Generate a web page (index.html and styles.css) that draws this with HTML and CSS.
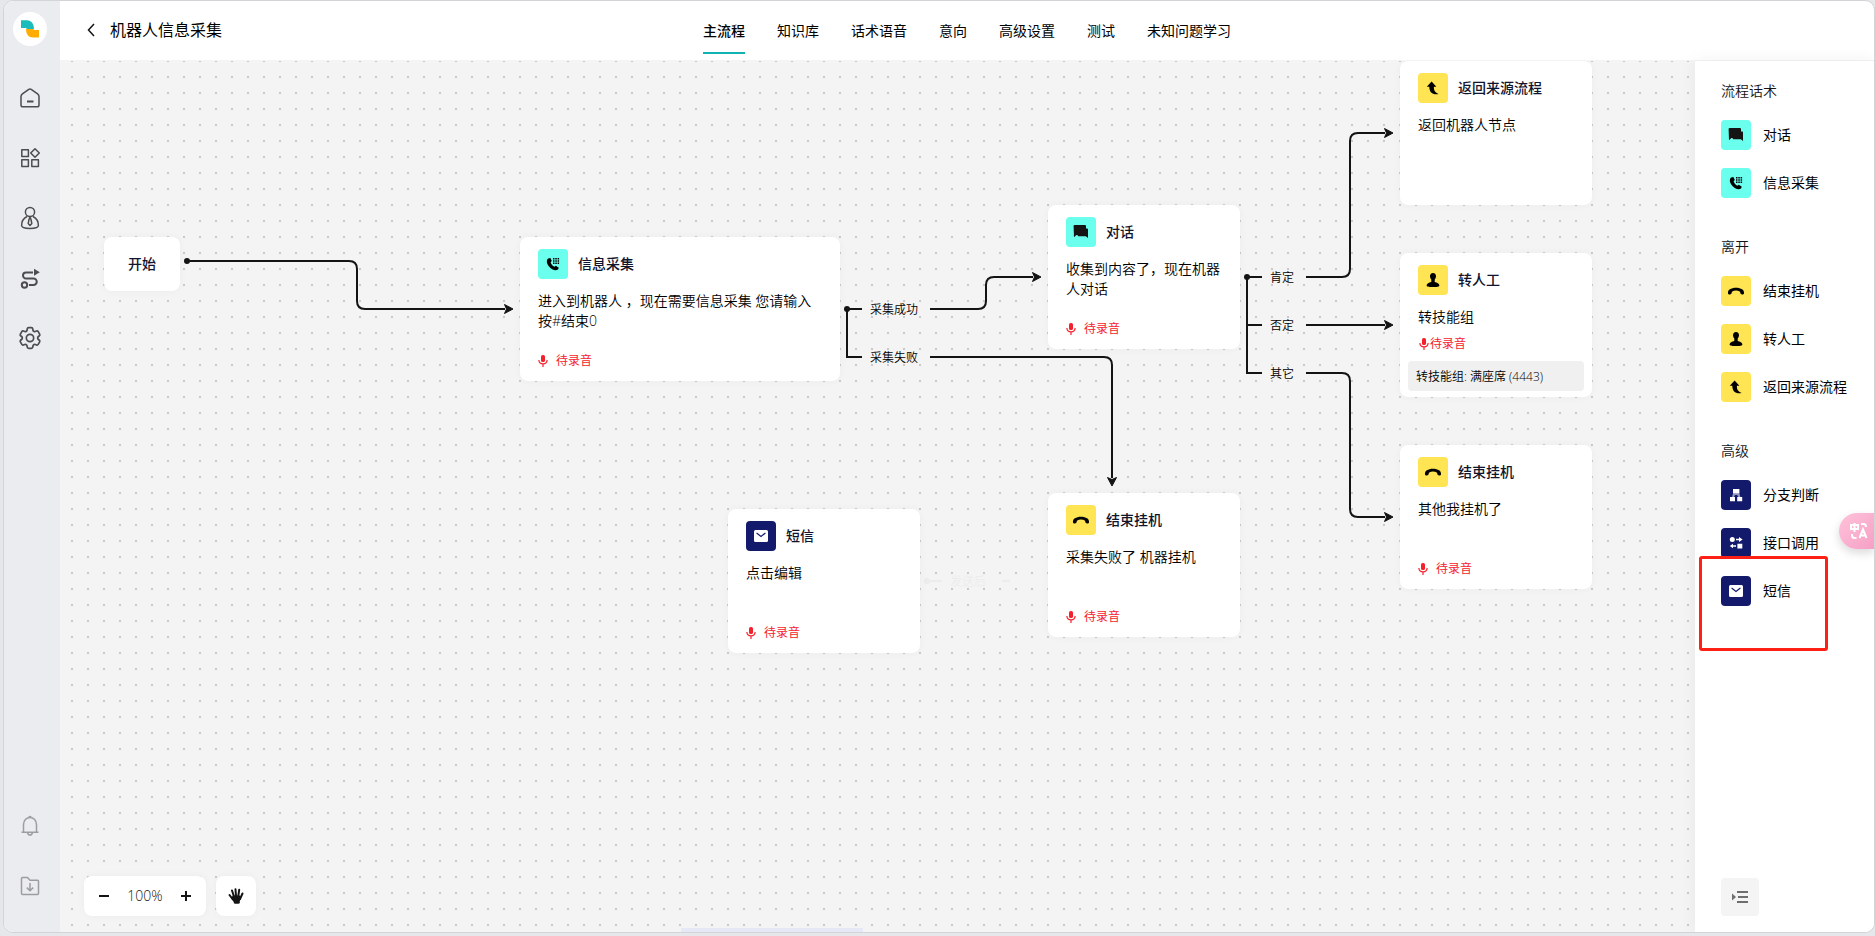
FILE: index.html
```html
<!DOCTYPE html>
<html lang="zh-CN">
<head>
<meta charset="utf-8">
<meta name="viewport" content="width=device-width, initial-scale=1">
<title>机器人信息采集</title>
<link rel="stylesheet" href="styles.css">
</head>
<body>
<svg class="sprite" aria-hidden="true">
  <symbol id="i-phone" viewBox="0 0 30 30"><path d="M10.2 9.4C8.4 10.8 8.3 13.8 10.8 17.2C13.8 20.8 17.4 22.2 20 20.6L20.8 18.8L17.8 16.8L16.4 17.8C14.6 17 13.2 15.3 12.6 13.3L13.8 12.1L12.4 9Z"/><path d="M15 9h1.500v1.500h-1.500zM17.300 9h1.500v1.500h-1.500zM19.600 9h1.500v1.500h-1.500zM15 11.300h1.500v1.500h-1.500zM17.300 11.300h1.500v1.500h-1.500zM19.600 11.300h1.500v1.500h-1.500zM15 13.600h1.500v1.500h-1.500zM17.300 13.600h1.500v1.500h-1.500zM19.600 13.600h1.500v1.500h-1.500z"/></symbol>
  <symbol id="i-chat" viewBox="0 0 30 30"><path fill="#141414" d="M8.600 8H19Q20 8 20 9V11.600H21.200Q22 11.600 22 12.400V20.900L19.800 19.200H12.400Q11.600 19.200 11.600 18H10.400L8 20.200L7.600 9Q7.600 8 8.600 8Z"/></symbol>
  <symbol id="i-hangup" viewBox="0 0 30 30"><path d="M7 17.400C6.400 14 10 11.800 15 11.800S23.600 14 23 17.400Q22.800 18.800 20.800 18.400Q18.900 18 19.100 15.800Q17 14.600 15 14.600T10.900 15.800Q11.100 18 9.200 18.400Q7.200 18.800 7 17.400Z"/></symbol>
  <symbol id="i-person" viewBox="0 0 30 30"><path d="M15 8C17 8 18 9.400 18 11.200C18 12.800 17.200 14 16.700 14.600V17C19 17.400 21.400 18.600 21.400 20.400C21.400 21.800 18 22.100 15 22.100S8.600 21.800 8.600 20.400C8.600 18.600 11 17.400 13.300 17V14.600C12.800 14 12 12.800 12 11.200C12 9.400 13 8 15 8Z"/></symbol>
  <symbol id="i-return" viewBox="0 0 30 30"><path d="M13.600 8.500L18.400 13.800H15.900C15.700 17.400 17 19.800 20.800 21C15.400 22.300 11.300 20 11.300 13.800H8.800Z"/></symbol>
  <symbol id="i-branch" viewBox="0 0 30 30"><g fill="#fff"><path d="M12 9h6.400v4.400H12zM9 17h5v4.200H9zM16.200 17h5v4.200h-5z"/><path opacity=".55" d="M12 13.400h6.400l1 3.600h-2.200l-1-2h-2.200l-1 2h-2z"/></g></symbol>
  <symbol id="i-api" viewBox="0 0 30 30"><g fill="#fff"><circle cx="11.300" cy="11.500" r="2.500"/><path d="M15 10.700h3V9l3.600 2.500L18 14v-1.700h-3zM16.400 15.800h4.900v4.600h-4.900zM15 17.300h-3v-1.500L8.800 18l3.200 2.200v-1.500h3z"/></g></symbol>
  <symbol id="i-mail" viewBox="0 0 30 30"><rect x="8" y="9" width="14" height="12" rx="1.500" fill="#fff"/><path d="M10.600 12L15 15.400L19.400 12" fill="none" stroke="#141a6b" stroke-width="1.200"/></symbol>
  <symbol id="i-mic" viewBox="0 0 10 12"><rect x="3" y="0" width="4" height="7" rx="1.600" fill="currentColor"/><path d="M.9 5Q1 8.900 5 8.900T9.100 5M5 9v3" fill="none" stroke="currentColor" stroke-width="1.200"/></symbol>
</svg>

<div class="window">
  <nav class="rail" aria-label="主导航">
    <a class="logo" href="#" aria-label="首页"><svg width="34" height="34" viewBox="0 0 34 34"><path fill="#1cbcbc" d="M8 8.300h6C18.500 8.300 21 12 21 17H14L13 16H8Z"/><path fill="#ffad05" d="M13 17h7l1 1h5v7.500h-6C15.500 25.500 13 22 13 17Z"/></svg></a>
    <div class="rail-main">
      <a class="rail-link" href="#" aria-label="概览"><svg viewBox="0 0 24 24"><path d="M10.800 3.300Q12 2.500 13.200 3.300L19.600 7.800Q21 8.800 21 10.500V19Q21 20.800 19.200 20.800H4.800Q3 20.800 3 19V10.500Q3 8.800 4.400 7.800Z"/><path d="M9 15.500h6.500" stroke-width="2"/></svg></a>
      <a class="rail-link" href="#" aria-label="应用"><svg viewBox="0 0 24 24"><path d="M3.800 3.800h6.600v6.600H3.800zM3.800 13.800h6.600v6.600H3.800zM13.800 13.800h6.600v6.600h-6.600zM17 2.700L21.300 7L17 11.300L12.700 7Z"/></svg></a>
      <a class="rail-link" href="#" aria-label="客服"><svg viewBox="0 0 24 24"><circle cx="12" cy="6" r="4.600"/><path d="M9 10.500C5 12.500 3.600 16 3.600 19.500Q3.600 22.400 12 22.400T20.400 19.500C20.400 16 19 12.500 15 10.500M12 11L13 13.500L13.800 17.500L12 19.500L10.200 17.500L11 13.500Z"/></svg></a>
      <a class="rail-link" href="#" aria-label="流程"><svg viewBox="0 0 24 24"><circle cx="6.500" cy="19" r="2.700" stroke-width="2"/><path stroke-width="2" d="M15 6.500H8a3 3 0 0 0 0 6h7.500a3.200 3.200 0 0 1 0 6.500h-4.500"/><path class="solid" d="M16 2.800L21.800 6.200L16 9.800Z"/></svg></a>
      <a class="rail-link" href="#" aria-label="设置"><svg viewBox="1.500 1.500 21 21"><path d="M9.594 3.940c.09-.542.56-.94 1.110-.94h2.593c.55 0 1.020.398 1.110.94l.213 1.281c.063.374.313.686.645.870.074.040.147.083.220.127.325.196.720.257 1.075.124l1.217-.456a1.125 1.125 0 0 1 1.370.490l1.296 2.247a1.125 1.125 0 0 1-.260 1.431l-1.003.827c-.293.241-.438.613-.430.992a7.723 7.723 0 0 1 0 .255c-.008.378.137.750.430.991l1.004.827c.424.350.534.955.260 1.430l-1.298 2.247a1.125 1.125 0 0 1-1.369.491l-1.217-.456c-.355-.133-.750-.072-1.076.124a6.470 6.470 0 0 1-.220.128c-.331.183-.581.495-.644.869l-.213 1.281c-.090.543-.560.940-1.110.940h-2.594c-.550 0-1.019-.398-1.110-.940l-.213-1.281c-.062-.374-.312-.686-.644-.870a6.520 6.520 0 0 1-.220-.127c-.325-.196-.720-.257-1.076-.124l-1.217.456a1.125 1.125 0 0 1-1.369-.490l-1.297-2.247a1.125 1.125 0 0 1 .260-1.431l1.004-.827c.292-.240.437-.613.430-.991a6.932 6.932 0 0 1 0-.255c.007-.380-.138-.751-.430-.992l-1.004-.827a1.125 1.125 0 0 1-.260-1.430l1.297-2.247a1.125 1.125 0 0 1 1.370-.491l1.216.456c.356.133.751.072 1.076-.124.072-.044.146-.086.220-.128.332-.183.582-.495.644-.869l.214-1.280Z"/><circle cx="12" cy="12" r="3.200"/></svg></a>
    </div>
    <div class="rail-foot">
      <a class="rail-link muted" href="#" aria-label="通知"><svg viewBox="0 0 24 24"><path d="M5.500 18V10.500A6.500 7 0 0 1 18.500 10.500V18M3.500 18.200h17M9.500 18.500Q10 21 12 21T14.500 18.500M10.800 3.200Q12 1.800 13.200 3.200"/></svg></a>
      <a class="rail-link muted" href="#" aria-label="下载"><svg viewBox="0 0 24 24"><path d="M3.500 4.500Q3.500 3.500 4.500 3.500H9.500L12 6.200H19.500Q20.500 6.200 20.500 7.200V19.500Q20.500 20.500 19.500 20.500H4.500Q3.500 20.500 3.500 19.500ZM12 9V16.500M8.800 13.600L12 16.800L15.200 13.600"/></svg></a>
    </div>
  </nav>

  <div class="main">
    <header class="topbar">
      <div class="heading">
        <button class="back" type="button" aria-label="返回"><svg width="8" height="14" viewBox="0 0 8 14"><path d="M7 1L1.500 7L7 13"/></svg></button>
        <h1>机器人信息采集</h1>
      </div>
      <nav class="tabs" aria-label="机器人配置">
        <a class="tab active" href="#" aria-current="page">主流程</a>
        <a class="tab" href="#">知识库</a>
        <a class="tab" href="#">话术语音</a>
        <a class="tab" href="#">意向</a>
        <a class="tab" href="#">高级设置</a>
        <a class="tab" href="#">测试</a>
        <a class="tab" href="#">未知问题学习</a>
      </nav>
    </header>

    <div class="workspace">
      <main class="canvas">
        <svg class="edges" aria-hidden="true">
          <defs>
            <marker id="arrow" viewBox="-1 -1 12 12" refX="1" refY="5" markerWidth="12" markerHeight="12" markerUnits="userSpaceOnUse" orient="auto"><path class="arrowhead" d="M.5 .5L9 5L.5 9.500L2.500 5Z"/></marker>
          </defs>
          <g transform="translate(-60 -61)">
            <g class="lines">
              <path marker-end="url(#arrow)" d="M187 261H349q8 0 8 8V301q0 8 8 8H505"/>
              <path d="M862 309H847V357H862"/>
              <path marker-end="url(#arrow)" d="M930 309H978q8 0 8-8V285q0-8 8-8H1033"/>
              <path marker-end="url(#arrow)" d="M930 357H1104q8 0 8 8V478"/>
              <path d="M1262 277H1247V373H1262M1247 325H1262"/>
              <path marker-end="url(#arrow)" d="M1306 277H1342q8 0 8-8V141q0-8 8-8H1385"/>
              <path marker-end="url(#arrow)" d="M1306 325H1385"/>
              <path marker-end="url(#arrow)" d="M1306 373H1342q8 0 8 8V509q0 8 8 8H1385"/>
            </g>
            <circle cx="187" cy="261" r="3"/><circle cx="847" cy="309" r="3"/><circle cx="1247" cy="277" r="3"/>
            <g class="ghost"><circle cx="927" cy="581" r="3"/><path d="M927 580H942V582H927ZM1002 580H1010V582H1002Z"/></g>
          </g>
        </svg>
        <span class="edge-label collect-ok">采集成功</span>
        <span class="edge-label collect-fail">采集失败</span>
        <span class="edge-label yes">肯定</span>
        <span class="edge-label no">否定</span>
        <span class="edge-label other">其它</span>
        <span class="edge-label sent">发送后</span>

        <article class="node node-start"><h2>开始</h2></article>
        <article class="node node-collect">
          <div class="node-head"><span class="badge cyan"><svg><use href="#i-phone"/></svg></span><h2>信息采集</h2></div>
          <p>进入到机器人 ，现在需要信息采集 您请输入按#结束0</p>
          <div class="record"><svg><use href="#i-mic"/></svg><span>待录音</span></div>
        </article>
        <article class="node node-dialog">
          <div class="node-head"><span class="badge cyan"><svg><use href="#i-chat"/></svg></span><h2>对话</h2></div>
          <p>收集到内容了，现在机器人对话</p>
          <div class="record"><svg><use href="#i-mic"/></svg><span>待录音</span></div>
        </article>
        <article class="node node-return">
          <div class="node-head"><span class="badge yellow"><svg><use href="#i-return"/></svg></span><h2>返回来源流程</h2></div>
          <p>返回机器人节点</p>
        </article>
        <article class="node node-transfer">
          <div class="node-head"><span class="badge yellow"><svg><use href="#i-person"/></svg></span><h2>转人工</h2></div>
          <p>转技能组</p>
          <div class="record tight"><svg><use href="#i-mic"/></svg><span>待录音</span></div>
          <div class="skill">转技能组: 满座席 (4443)</div>
        </article>
        <article class="node node-end-other">
          <div class="node-head"><span class="badge yellow"><svg><use href="#i-hangup"/></svg></span><h2>结束挂机</h2></div>
          <p>其他我挂机了</p>
          <div class="record"><svg><use href="#i-mic"/></svg><span>待录音</span></div>
        </article>
        <article class="node node-end-fail">
          <div class="node-head"><span class="badge yellow"><svg><use href="#i-hangup"/></svg></span><h2>结束挂机</h2></div>
          <p>采集失败了 机器挂机</p>
          <div class="record"><svg><use href="#i-mic"/></svg><span>待录音</span></div>
        </article>
        <article class="node node-sms">
          <div class="node-head"><span class="badge navy"><svg><use href="#i-mail"/></svg></span><h2>短信</h2></div>
          <p>点击编辑</p>
          <div class="record"><svg><use href="#i-mic"/></svg><span>待录音</span></div>
        </article>

        <div class="tools">
          <div class="zoom">
            <button type="button" aria-label="缩小"><svg width="10" height="10" viewBox="0 0 10 10"><path d="M0 5h10"/></svg></button>
            <output>100%</output>
            <button type="button" aria-label="放大"><svg width="10" height="10" viewBox="0 0 10 10"><path d="M0 5h10M5 0v10"/></svg></button>
          </div>
          <button class="hand" type="button" aria-label="拖动画布"><svg width="16" height="16" viewBox="0 0 16 16"><path class="fingers" d="M1.500 7L4.500 11M4 2.500L5.800 8M7.500 1.200L8 8M11.200 1.800L10.300 8M14.500 5.500L12 11"/><path class="palm" d="M4.800 7.500H11.600L13.200 9.500Q12.500 12 11.800 13V15.200Q8.500 16.400 5.800 15.200V14Q4 12.500 3.200 10Z"/></svg></button>
        </div>
        <div class="scroll-hint"></div>
      </main>

      <aside class="palette" aria-label="节点">
        <section><h3>流程话术</h3>
          <button class="item" type="button"><span class="badge cyan"><svg><use href="#i-chat"/></svg></span>对话</button>
          <button class="item" type="button"><span class="badge cyan"><svg><use href="#i-phone"/></svg></span>信息采集</button>
        </section>
        <section><h3>离开</h3>
          <button class="item" type="button"><span class="badge yellow"><svg><use href="#i-hangup"/></svg></span>结束挂机</button>
          <button class="item" type="button"><span class="badge yellow"><svg><use href="#i-person"/></svg></span>转人工</button>
          <button class="item" type="button"><span class="badge yellow"><svg><use href="#i-return"/></svg></span>返回来源流程</button>
        </section>
        <section><h3>高级</h3>
          <button class="item" type="button"><span class="badge navy"><svg><use href="#i-branch"/></svg></span>分支判断</button>
          <button class="item" type="button"><span class="badge navy"><svg><use href="#i-api"/></svg></span>接口调用</button>
          <button class="item" type="button"><span class="badge navy"><svg><use href="#i-mail"/></svg></span>短信</button>
        </section>
        <button class="collapse" type="button" aria-label="收起"><svg width="16" height="14" viewBox="0 0 16 14"><path d="M0 3.500L4 7L0 10.500Z"/><path d="M5 1h11v2H5zM6 6h10v2H6zM5 11h11v2H5z"/></svg></button>
        <div class="highlight"></div>
        <button class="translate" type="button" aria-label="翻译"><svg width="18" height="18" viewBox="0 0 18 18"><path d="M1 3h7v4H1zM4.500 1v9M11 2h2.500q2.500 0 2.500 3M2 12v1.500q0 2.500 3 2.500h1.500M9.500 16L13 7.500L16.500 16M10.800 13.500h4.400"/></svg></button>
      </aside>
    </div>
  </div>
</div>
</body>
</html>
```
FILE: styles.css
```css
* { box-sizing: border-box; }
body {
  margin: 0;
  height: 100vh;
  padding: 0 0 3px 3px;
  background: #e6e7eb;
  color: #000;
  font: 350 14px/20px "Open Sans", "Noto Sans CJK SC", sans-serif;
}
h1, h2, h3, p { margin: 0; font-size: 14px; font-weight: inherit; }
a { color: inherit; text-decoration: none; }
button { padding: 0; border: 0; background: none; color: inherit; font: inherit; cursor: pointer; }
svg { display: block; }
.sprite { position: absolute; width: 0; height: 0; }

.window {
  display: flex;
  height: 100%;
  overflow: hidden;
  border: 1px solid #d3d4d7;
  border-radius: 10px;
  background: #fff;
}

/* Icon rail */
.rail {
  display: flex;
  flex: none;
  flex-direction: column;
  align-items: center;
  width: 56px;
  padding: 11px 0 34px;
  background: #ebecf0;
}
.logo { margin: 0 4px 40px 0; border-radius: 50%; background: #fff; }
.rail-main, .rail-foot { display: flex; flex-direction: column; gap: 36px; margin-right: 4px; }
.rail-foot { margin-top: auto; }
.rail-link svg { width: 24px; height: 24px; fill: none; stroke: #4d4d4f; stroke-width: 1.5; stroke-linejoin: round; }
.rail-link .solid { fill: #4d4d4f; stroke: none; }
.rail-link.muted svg { stroke: #9c9da0; }

/* Header */
.main { display: flex; flex: 1; flex-direction: column; min-width: 0; }
.topbar {
  display: grid;
  grid-template-columns: 1fr auto 1fr;
  flex: none;
  height: 60px;
  border-bottom: 1px solid #f4f4f4;
  font-weight: 400;
}
.heading { display: flex; align-items: center; gap: 15px; padding: 0 0 1px 27px; }
.heading h1 { font-size: 16px; line-height: 24px; }
.back path { fill: none; stroke: #141414; stroke-width: 1.5; }
.tabs { display: flex; gap: 32px; }
.tab { height: 53px; padding-top: 20px; white-space: nowrap; }
.tab.active { border-bottom: 2px solid #10b2b2; font-weight: 500; }

/* Flow canvas */
.workspace { display: flex; flex: 1; min-height: 0; }
.canvas {
  position: relative;
  flex: 1;
  overflow: hidden;
  background-color: #f4f4f4;
  background-image: linear-gradient(#f4f4f4 14px, transparent 14px), linear-gradient(90deg, #c9c9c9 2px, transparent 2px);
  background-position: 0 1px, 11px 0;
  background-size: 16px 16px;
}
.edges { position: absolute; inset: 0; width: 100%; height: 100%; fill: #141414; }
.lines { fill: none; stroke: #141414; stroke-width: 2; }
.arrowhead { fill: #141414; stroke: #141414; stroke-width: 1; }
.ghost { opacity: .03; }
.edge-label { position: absolute; font-size: 12px; line-height: 18px; white-space: nowrap; }
.collect-ok { left: 810px; top: 240px; }
.collect-fail { left: 810px; top: 288px; }
.yes { left: 1210px; top: 208px; }
.no { left: 1210px; top: 256px; }
.other { left: 1210px; top: 304px; }
.sent { left: 890px; top: 512px; opacity: .03; }

.node {
  position: absolute;
  display: flex;
  flex-direction: column;
  width: 192px;
  min-height: 144px;
  padding: 12px 18px 11px;
  border-radius: 8px;
  background: #fff;
  box-shadow: 0 0 8px rgba(0, 0, 0, .04);
}
.node h2 { color: #11142d; font-weight: 500; }
.node p { margin-top: 12px; }
.node-head { display: flex; align-items: center; gap: 10px; }
.node-start { left: 44px; top: 176px; width: 76px; min-height: 54px; padding: 12px; align-items: center; justify-content: center; }
.node-collect { left: 460px; top: 176px; width: 320px; }
.node-dialog { left: 988px; top: 144px; }
.node-return { left: 1340px; top: 0; }
.node-transfer { left: 1340px; top: 192px; padding: 12px 8px 6px; }
.node-transfer .node-head, .node-transfer p { margin-left: 10px; }
.node-end-other { left: 1340px; top: 384px; }
.node-end-fail { left: 988px; top: 432px; }
.node-sms { left: 668px; top: 448px; }

.badge { flex: none; width: 30px; height: 30px; border-radius: 4px; }
.badge svg { width: 30px; height: 30px; }
.cyan { background: #6bffee; }
.yellow { background: #ffe553; }
.navy { background: #141a6b; }

.record { display: flex; align-items: center; gap: 8px; margin-top: auto; color: #f5222d; font-size: 12px; font-weight: 400; line-height: 18px; }
.record svg { width: 10px; height: 12px; }
.record.tight { gap: 1px; margin: 8px 0 8px 11px; }
.skill { padding: 7px 8px 5px; border-radius: 4px; background: #f0f0f0; font-size: 12px; line-height: 18px; }

.tools { position: absolute; left: 24px; bottom: 16px; display: flex; gap: 10px; }
.zoom, .hand { display: flex; align-items: center; height: 40px; border-radius: 8px; background: #fff; box-shadow: 0 0 8px rgba(0, 0, 0, .04); }
.zoom { width: 122px; justify-content: space-between; padding: 0 15px; }
.zoom output { color: #141414; }
.zoom path { stroke: #141414; stroke-width: 2; }
.hand { width: 40px; justify-content: center; }
.fingers { fill: none; stroke: #141414; stroke-width: 2; stroke-linecap: round; }
.palm { fill: #141414; }
.scroll-hint { position: absolute; left: 38%; bottom: 0; width: 182px; height: 4px; background: #e6e8f6; }

/* Node palette */
.palette {
  position: relative;
  display: flex;
  flex: none;
  flex-direction: column;
  gap: 38px;
  width: 179px;
  padding: 19px 0 16px 26px;
  background: #fff;
  box-shadow: 0 0 16px rgba(0, 0, 0, .06);
}
.palette section { display: flex; flex-direction: column; align-items: flex-start; gap: 18px; }
.palette h3 { color: #141414; line-height: 22px; }
.item { display: flex; align-items: center; gap: 12px; font-weight: 400; white-space: nowrap; }
.collapse { display: grid; place-items: center; width: 38px; height: 38px; margin-top: auto; border-radius: 4px; background: #f4f4f4; }
.collapse path { fill: #6e6e6e; }
.highlight { position: absolute; left: 4px; top: 495px; width: 129px; height: 95px; border: 3px solid #ff2015; border-radius: 3px; }
.translate {
  position: absolute;
  right: 0;
  top: 452px;
  width: 35px;
  height: 36px;
  padding-left: 11px;
  border-radius: 18px 0 0 18px;
  background: linear-gradient(135deg, #ffc3da, #f5a0c5);
  box-shadow: 0 4px 10px rgba(0, 0, 0, .15);
}
.translate path { fill: none; stroke: #fff; stroke-width: 2; }
```
